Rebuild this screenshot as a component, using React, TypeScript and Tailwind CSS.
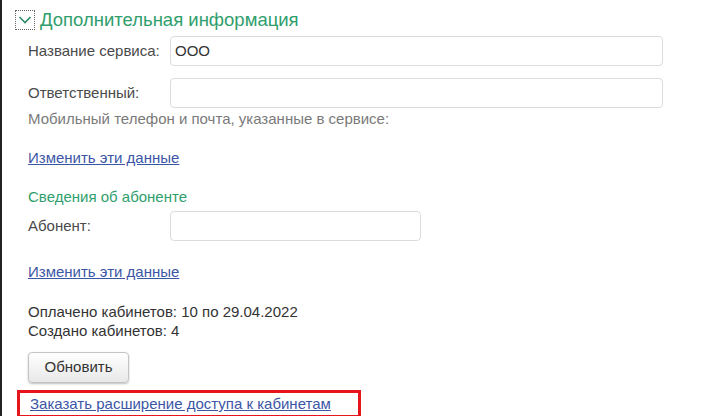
const Field = ({ label, value, width }: { label: string; value?: string; width: string }) => (
  <div className="flex items-center">
    <span className="w-[142px] shrink-0 text-[15px] text-[#4a4a4a]">{label}</span>
    <div className={`h-[30px] ${width} rounded-[4px] border border-[#dcdcdc] bg-white px-[4px] flex items-center text-[15px] text-[#333]`}>
      {value}
    </div>
  </div>
)

const App = () => {
  return (
    <div
      className="w-[720px] h-[416px] overflow-hidden bg-white border-l-[2px] border-[#222]"
      style={{ fontFamily: '"Liberation Sans", Arial, sans-serif' }}
    >
      <div className="flex items-center gap-[5px] pl-[13px] pt-[10px] h-[30px]">
        <div className="w-[20px] h-[20px] border border-dotted border-[#666] flex items-center justify-center">
          <svg width="14" height="10" viewBox="0 0 14 10">
            <path d="M1.5 2 L7 7.5 L12.5 2" fill="none" stroke="#2f8a66" strokeWidth="1.6" />
          </svg>
        </div>
        <span className="text-[18.5px] text-[#2f9e6c] leading-none">Дополнительная информация</span>
      </div>

      <div className="pl-[26px] flex flex-col">
        <div className="mt-[6px]">
          <Field label="Название сервиса:" value="ООО" width="w-[493px]" />
        </div>
        <div className="mt-[12px]">
          <Field label="Ответственный:" width="w-[493px]" />
        </div>
        <div className="mt-[2px] text-[15px] text-[#7a7a7a] leading-[18px]">
          Мобильный телефон и почта, указанные в сервисе:
        </div>

        <a className="mt-[21px] text-[15px] text-[#3c56a6] underline leading-[18px] w-fit">Изменить эти данные</a>

        <div className="mt-[21px] text-[15px] text-[#2f9e6c] leading-[18px]">Сведения об абоненте</div>
        <div className="mt-[5px]">
          <Field label="Абонент:" width="w-[251px]" />
        </div>

        <a className="mt-[22px] text-[15px] text-[#3c56a6] underline leading-[18px] w-fit">Изменить эти данные</a>

        <div className="mt-[21px] text-[15px] text-[#333] leading-[19px]">
          <div>Оплачено кабинетов: 10 по 29.04.2022</div>
          <div>Создано кабинетов: 4</div>
        </div>

        <button className="mt-[12px] w-[101px] h-[31px] rounded-[4px] border border-[#c4c4c4] bg-gradient-to-b from-white to-[#e8e8e8] shadow-[0_1px_2px_rgba(0,0,0,0.25)] text-[15px] text-[#333]">
          Обновить
        </button>
      </div>

      <div className="ml-[15px] mt-[7px] w-[344px] h-[28px] border-[3px] border-[#e8141b] pl-[10px] flex items-center">
        <a className="text-[15px] text-[#3c56a6] underline leading-[18px] whitespace-nowrap">Заказать расширение доступа к кабинетам</a>
      </div>
    </div>
  )
}

export default App
